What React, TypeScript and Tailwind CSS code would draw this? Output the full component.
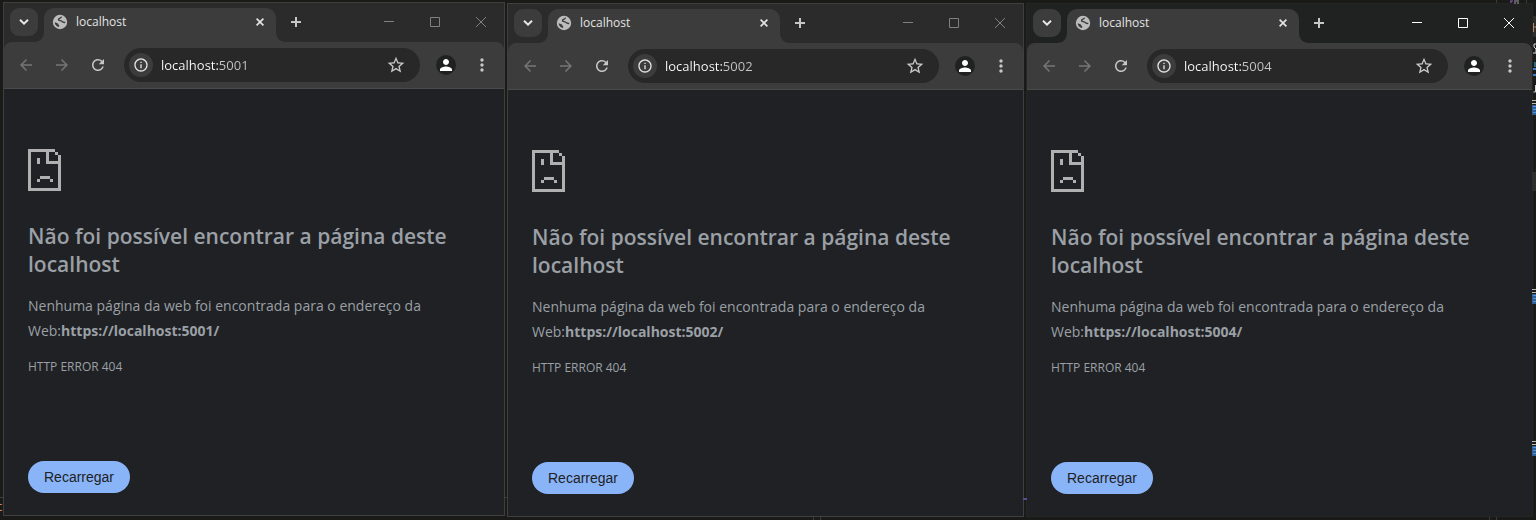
import { useState } from "react";
import {
  MdArrowBack,
  MdArrowForward,
  MdInfoOutline,
  MdMoreVert,
  MdPerson,
  MdRefresh,
  MdStarBorder,
} from "react-icons/md";

type BrowserProps = { port: string; active?: boolean };

function SadPage() {
  return (
    <svg width="33" height="42" viewBox="0 0 33 42" fill="#b0b0b0" shapeRendering="crispEdges" aria-hidden="true">
      <rect x="0" y="0" width="27" height="3" />
      <rect x="0" y="0" width="3" height="42" />
      <rect x="0" y="39" width="33" height="3" />
      <rect x="30" y="6" width="3" height="36" />
      <rect x="27" y="3" width="3" height="3" />
      <rect x="18" y="0" width="3" height="15" />
      <rect x="18" y="12" width="15" height="3" />
      <rect x="9" y="9" width="3" height="6" />
      <rect x="12" y="27" width="10" height="3" />
      <rect x="9" y="30" width="3" height="3" />
      <rect x="22" y="30" width="3" height="3" />
    </svg>
  );
}

function Globe() {
  return (
    <svg className="shrink-0" width="16" height="16" viewBox="0 0 16 16" aria-hidden="true">
      <circle cx="8" cy="8" r="7.2" fill="#bcbcbc" />
      <path
        d="M9.4 2.6c.2 1.7-2.700 1.300-2.900 2.900-.1 1.400 2.900.8 3.800 2.200.5.8 1.700.8 3 .7"
        fill="none"
        stroke="#3c3c3c"
        strokeWidth="1.4"
      />
      <path d="M2.600 8.300 5.500 9.300c1 .4.500 1.300 1.300 1.800.7.400.400 1.200.2 2C4.800 12.900 2.800 10.900 2.600 8.300Z" fill="#3c3c3c" />
    </svg>
  );
}

function TabStrip({ active }: { active: boolean }) {
  const strip = active ? "bg-[#202221]" : "bg-[#2b2b2b]";
  const control = active ? "text-white" : "text-[#808080]";
  return (
    <div className={`flex h-[39px] ${strip}`}>
      <button
        type="button"
        aria-label="Pesquisar guias"
        className="mt-[5px] ml-1.5 flex size-7 shrink-0 items-center justify-center rounded-[9px] bg-[#3c3c3c] text-[#e8e8e8]"
      >
        <svg width="10" height="6" viewBox="0 0 10 6" fill="none" stroke="currentColor" strokeWidth="2">
          <path d="M1 .8 5 4.6 9 .8" />
        </svg>
      </button>
      <svg className="ml-[-4px] shrink-0 self-end" width="10" height="10" viewBox="0 0 10 10" fill="#3c3c3c" aria-hidden="true">
        <path d="M10 0v10H0C6 10 10 6 10 0Z" />
      </svg>
      <div className="mt-[5px] flex w-[232px] shrink items-center rounded-t-[10px] bg-[#3c3c3c] pr-2.5 pb-1.5 pl-2">
        <Globe />
        <span className="ml-2 flex-1 truncate text-xs leading-[22px] text-[#e3e3e3]">localhost</span>
        <button type="button" aria-label="Fechar guia" className="flex size-3 items-center justify-center text-[#e3e3e3]">
          <svg width="8" height="8" viewBox="0 0 8 8" stroke="currentColor" strokeWidth="1.7">
            <path d="m.6.6 6.8 6.8M7.4.6.6 7.4" />
          </svg>
        </button>
      </div>
      <svg className="shrink-0 self-end" width="10" height="10" viewBox="0 0 10 10" fill="#3c3c3c" aria-hidden="true">
        <path d="M0 0v10h10C4 10 0 6 0 0Z" />
      </svg>
      <button type="button" aria-label="Nova guia" className="mt-[5px] flex h-7 w-5 items-center justify-center text-[#c7c7c7]">
        <svg width="10" height="10" viewBox="0 0 10 10" stroke="currentColor" strokeWidth="2">
          <path d="M5 0v10M0 5h10" />
        </svg>
      </button>
      <div className={`ml-auto flex h-[38px] shrink-0 ${control}`}>
        <button type="button" aria-label="Minimizar" className="flex w-[46px] items-center justify-center">
          <svg width="10" height="10" viewBox="0 0 10 10" stroke="currentColor">
            <path d="M0 4.5h10" />
          </svg>
        </button>
        <button type="button" aria-label="Maximizar" className="flex w-[46px] items-center justify-center">
          <svg width="10" height="10" viewBox="0 0 10 10" stroke="currentColor" fill="none">
            <path d="M.5.5h9v9h-9Z" />
          </svg>
        </button>
        <button type="button" aria-label="Fechar" className="flex w-[46px] items-center justify-center">
          <svg width="10" height="10" viewBox="0 0 10 10" stroke="currentColor">
            <path d="m0 0 10 10M10 0 0 10" />
          </svg>
        </button>
      </div>
    </div>
  );
}

function Toolbar({ port, active }: { port: string; active: boolean }) {
  const [url, setUrl] = useState(`localhost:${port}`);
  return (
    <div className={active ? "bg-[#202221]" : "bg-[#2b2b2b]"}>
      <div className="flex h-[47px] items-center rounded-t-lg border-b border-[#4a4a4a] bg-[#3c3c3c] px-1">
        <button type="button" aria-label="Voltar" className="flex w-9 justify-center text-[#757575]">
          <MdArrowBack className="size-[18px]" />
        </button>
        <button type="button" aria-label="Avançar" className="flex w-9 justify-center text-[#757575]">
          <MdArrowForward className="size-[18px]" />
        </button>
        <button type="button" aria-label="Recarregar esta página" className="flex w-9 justify-center text-[#c7c7c7]">
          <MdRefresh className="size-[18px]" />
        </button>
        <div className="mx-2 flex h-[34px] min-w-0 flex-1 items-center rounded-full bg-[#282828] pr-3.5 pl-[5px]">
          <button
            type="button"
            aria-label="Ver informações do site"
            className="flex size-6 shrink-0 items-center justify-center rounded-full bg-[#3c3c3c] text-[#e3e3e3]"
          >
            <MdInfoOutline className="size-4" />
          </button>
          <input
            type="text"
            aria-label="Barra de endereço e de pesquisa"
            value={url}
            onChange={(e) => setUrl(e.target.value)}
            className="ml-2 h-6 min-w-0 flex-1 bg-[linear-gradient(90deg,#ffffff_59px,#c7c7c7_59px)] bg-clip-text text-[13px] text-transparent caret-white outline-none"
          />
          <button type="button" aria-label="Adicionar aos favoritos" className="text-[#c7c7c7]">
            <MdStarBorder className="size-5" />
          </button>
        </div>
        <button type="button" aria-label="Perfil" className="flex w-9 justify-center">
          <span className="flex size-5 items-center justify-center rounded-full bg-[#202221] text-white">
            <MdPerson className="size-[18px]" />
          </span>
        </button>
        <button type="button" aria-label="Menu" className="flex w-9 justify-center text-[#c7c7c7]">
          <MdMoreVert className="size-5" />
        </button>
      </div>
    </div>
  );
}

function Browser({ port, active = false }: BrowserProps) {
  return (
    <section
      className={`flex min-w-0 flex-1 flex-col border bg-[#202124] ${active ? "border-[#252525]" : "border-[#3f3f3d]"}`}
    >
      <TabStrip active={active} />
      <Toolbar port={port} active={active} />
      <main className="flex flex-col items-start px-6 pt-[60px] text-[#9aa0a6]">
        <SadPage />
        <h1 className="mt-[31px] text-[21px] leading-7 font-semibold">
          Não foi possível encontrar a página deste localhost
        </h1>
        <p className="mt-[15px] text-sm leading-[25px]">
          Nenhuma página da web foi encontrada para o endereço da Web:
          <strong>{`https://localhost:${port}/`}</strong>
        </p>
        <p className="mt-3.5 text-xs leading-5">HTTP ERROR 404</p>
        <button
          type="button"
          className="mt-[84px] h-8 rounded-full bg-[#8ab4f8] px-4 font-['Liberation_Sans',sans-serif] text-sm text-[#202124]"
        >
          Recarregar
        </button>
      </main>
    </section>
  );
}

/* Marks of the editor that lies behind the windows, visible along the right edge. */
function EditorEdge() {
  return (
    <svg className="absolute top-0 right-0" width="56" height="520" viewBox="0 0 56 520" aria-hidden="true">
      <path d="M16.5 0v3M46.5 0v3" stroke="#3a3a3a" />
      <path d="M30 1h3M30 2h2" stroke="#8a5cc0" />
      <path d="M34 1h5M34 3h2M37 3h2" stroke="#a0a0a0" />
      <path d="M53 16h3v21h-3zM52 172h4v19h-4z" fill="#2d2d2b" />
      <path d="M53.5 23v9M54 27h2" stroke="#b58863" />
      <path d="M56 44h-2v3l2 2v4h-3" stroke="#d8d8d8" fill="none" />
      <path d="M55 62v5" stroke="#41b8d8" />
      <path d="M53 69h3M53 75h3" stroke="#3d7fc4" strokeWidth="2" />
      <path d="M55.5 85v7h-2" stroke="#d8d8d8" fill="none" />
      {[104, 293, 445].map((y) => (
        <g key={y}>
          <path d={`M52 ${y - 3.5}h4M52 ${y - 0.5}h4`} stroke="#b9b9b0" />
          <path d={`M52 ${y + 1}h4v10h-4z`} fill="#315f91" />
          <path d={`M53 ${y + 2.5}h3M53 ${y + 5.5}h3M53 ${y + 8.5}h3`} stroke="#4f94dc" />
        </g>
      ))}
      <path d="M9.5 517v3M16.5 517v3" stroke="#3a3a3a" />
    </svg>
  );
}

export default function App() {
  return (
    <div className="relative grid min-h-screen grid-cols-[502fr_517fr_507fr] gap-x-0.5 overflow-hidden bg-[#1a1a18] px-[3px] font-['Open_Sans',sans-serif]">
      <EditorEdge />
      <span className="absolute bottom-1 left-[-4px] font-['Liberation_Mono',monospace] text-xs text-[#c58a6a]">te</span>
      <div className="relative flex min-w-0 pt-0.5 pb-1">
        <Browser port="5001" />
      </div>
      <div className="flex min-w-0 py-[3px]">
        <Browser port="5002" />
      </div>
      <div className="flex min-w-0 py-[3px]">
        <Browser port="5004" active />
      </div>
      <span className="absolute bottom-[22px] left-0 h-px w-[3px] bg-[#3f3f3d]" />
      <span className="absolute bottom-[22px] left-[505px] h-px w-0.5 bg-[#3f3f3d]" />
      <span className="absolute bottom-5 left-[1023px] h-0.5 w-1 bg-[#5a4a9c]" />
      <span className="absolute bottom-0 left-[813px] h-[3px] w-2 border-x border-[#3a3a3a]" />
    </div>
  );
}
